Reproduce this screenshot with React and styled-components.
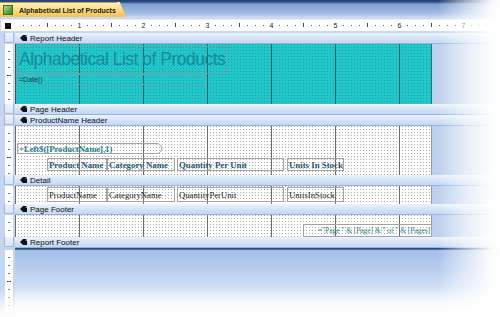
import React from 'react';
import styled, { createGlobalStyle, css } from 'styled-components';

const GlobalStyle = createGlobalStyle`
  html, body {
    margin: 0;
    padding: 0;
    background: #fff;
  }
  body {
    width: 500px;
    height: 317px;
    overflow: hidden;
    font-family: 'Liberation Sans', Arial, sans-serif;
  }
`;

const Screen = styled.div`
  position: relative;
  width: 500px;
  height: 317px;
  overflow: hidden;
  display: flex;
  flex-direction: column;
  background: #c5d6ef;
`;

const TabStrip = styled.div`
  height: 17px;
  flex: none;
  display: flex;
  align-items: flex-end;
  background: linear-gradient(to bottom, #24406c 0, #2f4f82 2px, #7e9dd0 4px, #a7bfe6 14px, #c9d9f2 17px);
`;

const DocTab = styled.div`
  height: 15px;
  width: 118px;
  margin-right: 8px;
  position: relative;
  display: flex;
  align-items: center;
  gap: 6px;
  padding-left: 3px;
  box-sizing: border-box;
  background: linear-gradient(to bottom, #fff1c4 0, #fddc85 45%, #f7c24e 100%);
  border-top: 1px solid #c89b3e;
  color: #1b1b1b;
  font-size: 7px;
  font-weight: bold;
  white-space: nowrap;

  &:after {
    content: '';
    position: absolute;
    top: -1px;
    right: -8px;
    width: 9px;
    height: 15px;
    background: linear-gradient(to bottom, #fff1c4 0, #fddc85 45%, #f7c24e 100%);
    clip-path: polygon(0 0, 30% 0, 100% 100%, 0 100%);
  }
`;

const TabIcon = styled.span`
  width: 10px;
  height: 10px;
  box-sizing: border-box;
  border: 1px solid #3d6b2f;
  background: linear-gradient(135deg, #b7e08e 0, #5fa444 60%, #3f8030 100%);
  flex: none;
`;

const RulerRow = styled.div`
  height: 15px;
  flex: none;
  box-sizing: border-box;
  padding: 2px 0 1px 1px;
  display: flex;
  background: #c9d9f1;
`;

const RulerBar = styled.div`
  flex: 1;
  display: flex;
  align-items: center;
  background:
    repeating-linear-gradient(to right, transparent 0 7px, #5a5a5a 7px 8px) 15px 5px / 100% 1px no-repeat,
    repeating-linear-gradient(to right, transparent 0 31px, #444 31px 32px) 15px 3px / 100% 4px no-repeat,
    #fff;
  border-top: 1px solid #e9eff9;
`;

const RulerCorner = styled.div`
  width: 14px;
  height: 100%;
  flex: none;
  display: flex;
  align-items: center;
  justify-content: center;
  background: #fff;

  &:before {
    content: '';
    width: 6px;
    height: 6px;
    margin-left: -1px;
    background: #111;
  }
`;

const RulerInch = styled.div`
  width: 64px;
  flex: none;
  display: flex;
  justify-content: flex-end;
`;

const RulerNum = styled.span`
  width: 7px;
  margin-right: -4px;
  text-align: center;
  background: #fff;
  font-size: 7px;
  line-height: 9px;
  color: #222;
  position: relative;
`;

const Row = styled.div`
  display: flex;
  flex: none;
  height: ${({ $h }) => $h}px;
`;

const Side = styled.div`
  width: 15px;
  flex: none;
  box-sizing: border-box;
  background: #c5d6ef;
  padding: ${({ $bar }) => ($bar ? '0 1px 1px 4px' : '0 2px 0 5px')};
  display: flex;
`;

const SideBox = styled.div`
  flex: 1;
  background: linear-gradient(to bottom, #eef3fb, #d8e4f6);
  border: 1px solid #a4badd;
  border-top: none;
`;

const VRuler = styled.div`
  flex: 1;
  background:
    repeating-linear-gradient(to bottom, transparent 0 7px, #707070 7px 8px) center 0 / 2px 100% no-repeat,
    repeating-linear-gradient(to bottom, transparent 0 31px, #333 31px 32px) center 0 / 4px 100% no-repeat,
    #fff;
`;

const SectionBar = styled.div`
  flex: 1;
  display: flex;
  align-items: center;
  gap: 3px;
  padding-left: 5px;
  box-sizing: border-box;
  background: linear-gradient(to bottom, #eef4fc 0, #d9e6f8 40%, #c4d7f2 100%);
  border-bottom: 1px solid #98b2da;
  font-size: 8px;
  color: #111;
  white-space: nowrap;
`;

const dots = (dot) => css`
  conic-gradient(from 270deg at 1px 1px, ${dot} 90deg, transparent 0) 0 0 / 3px 3px
`;

const Canvas = styled.div`
  width: 417px;
  flex: none;
  position: relative;
  box-sizing: border-box;
  border-right: 1px solid ${({ $teal }) => ($teal ? '#2f6f74' : '#9a9a9a')};
  background:
    linear-gradient(to right, ${({ $teal }) => ($teal ? '#2c5f66' : '#6c6c6c')} 1px, transparent 1px) 0 0 / 64px 100%,
    ${({ $teal }) => dots($teal ? '#15a4ac' : '#aaaaaa')},
    ${({ $teal }) => ($teal ? '#22c7ca' : '#ffffff')};
`;

const Gutter = styled.div`
  flex: 1;
  background: linear-gradient(to right, #bccfec, #d3e0f4);
`;

const EndLine = styled.div`
  height: 2px;
  flex: none;
  margin-left: 15px;
  background: linear-gradient(to bottom, #203c66, #5a7bab);
`;

const Below = styled.div`
  flex: 1;
  display: flex;
`;

const Empty = styled.div`
  flex: 1;
  background: linear-gradient(to bottom, #a4bfe8 0, #b9cef0 30%, #dfe9f8 70%, #ffffff 100%);
`;

/* design-surface controls: their place on the canvas is the content */
const Control = styled.div`
  position: absolute;
  box-sizing: border-box;
  left: ${({ $x }) => $x}px;
  top: ${({ $y }) => $y}px;
  width: ${({ $w }) => $w}px;
  height: ${({ $h }) => $h}px;
  border: 1px solid ${({ $teal }) => ($teal ? '#5eaab0' : '#a3a3a3')};
  display: flex;
  align-items: center;
  justify-content: ${({ $right }) => ($right ? 'flex-end' : 'flex-start')};
  padding: 0 1px;
  overflow: hidden;
  white-space: nowrap;
  border-radius: ${({ $round }) => ($round ? '0 5px 5px 0' : '0')};
`;

const TitleText = styled.span`
  font-family: 'Liberation Sans', Arial, sans-serif;
  font-size: 17.5px;
  letter-spacing: -0.5px;
  color: #178a99;
  line-height: 1;
`;

const SmallText = styled.span`
  font-family: 'Liberation Sans', Arial, sans-serif;
  font-size: 7px;
  color: #163f4c;
`;

const ExprText = styled.span`
  font-family: 'Liberation Serif', 'Times New Roman', serif;
  font-size: ${({ $size }) => $size || 8.8}px;
  font-weight: ${({ $bold }) => ($bold ? 'bold' : 'normal')};
  color: ${({ $color }) => $color || '#1c7e8e'};
`;

const FadeRight = styled.div`
  position: absolute;
  top: 0;
  right: 0;
  width: 62px;
  height: 100%;
  pointer-events: none;
  background: linear-gradient(to right, rgba(255, 255, 255, 0) 0, rgba(255, 255, 255, 0.55) 45%, rgba(255, 255, 255, 0.95) 85%, #fff 100%);
`;

const FadeBottom = styled.div`
  position: absolute;
  left: 0;
  bottom: 0;
  width: 100%;
  height: 30px;
  pointer-events: none;
  background: linear-gradient(to bottom, rgba(255, 255, 255, 0) 0, rgba(255, 255, 255, 0.85) 70%, #fff 100%);
`;

const BarIcon = () => (
  <svg width="7" height="6" viewBox="0 0 7 6">
    <path d="M0 3 L3 0 L7 0 L5 1.5 L7 1.5 L7 6 L3 6 Z" fill="#111" />
  </svg>
);

const Bar = ({ label }) => (
  <Row $h={11}>
    <Side $bar>
      <SideBox />
    </Side>
    <SectionBar>
      <BarIcon />
      {label}
    </SectionBar>
  </Row>
);

const Band = ({ h, teal, children }) => (
  <Row $h={h}>
    <Side>
      <VRuler />
    </Side>
    <Canvas $teal={teal}>{children}</Canvas>
    <Gutter />
  </Row>
);

const columns = [
  { x: 32, w: 60, label: 'Product Name', field: 'ProductName' },
  { x: 92, w: 68, label: 'Category Name', field: 'CategoryName' },
  { x: 162, w: 107, label: 'Quantity Per Unit', field: 'QuantityPerUnit' },
  { x: 272, w: 57, label: 'Units In Stock', field: 'UnitsInStock' },
];

const App = () => {
  const inches = [1, 2, 3, 4, 5, 6, 7];

  return (
    <>
      <GlobalStyle />
      <Screen>
        <TabStrip>
          <DocTab>
            <TabIcon />
            Alphabetical List of Products
          </DocTab>
        </TabStrip>

        <RulerRow>
          <RulerBar>
            <RulerCorner />
            {inches.map((n) => (
              <RulerInch key={n}>
                <RulerNum>{n}</RulerNum>
              </RulerInch>
            ))}
          </RulerBar>
        </RulerRow>

        <Row $h={1}>
          <Side $bar />
        </Row>

        <Bar label="Report Header" />
        <Band h={60} teal>
          <Control $teal $x={2} $y={2} $w={211} $h={28}>
            <TitleText>Alphabetical List of Products</TitleText>
          </Control>
          <Control $teal $x={2} $y={30} $w={188} $h={11}>
            <SmallText>=Date()</SmallText>
          </Control>
        </Band>

        <Bar label="Page Header" />
        <Bar label="ProductName Header" />
        <Band h={49}>
          <Control $x={2} $y={17} $w={145} $h={11} $round>
            <ExprText $bold $size={8.6}>=Left$([ProductName],1)</ExprText>
          </Control>
          {columns.map((c) => (
            <Control key={c.label} $x={c.x} $y={32} $w={c.w} $h={13}>
              <ExprText $bold $color="#1f5872">{c.label}</ExprText>
            </Control>
          ))}
        </Band>

        <Bar label="Detail" />
        <Band h={18}>
          {columns.map((c) => (
            <Control key={c.field} $x={c.x} $y={1} $w={c.w} $h={15}>
              <ExprText $size={8.7} $color="#222">{c.field}</ExprText>
            </Control>
          ))}
        </Band>

        <Bar label="Page Footer" />
        <Band h={22}>
          <Control $x={288} $y={9} $w={129} $h={13} $right>
            <ExprText $size={7.4} $color="#2a8797">="Page " &amp; [Page] &amp; " of " &amp; [Pages]</ExprText>
          </Control>
        </Band>

        <Bar label="Report Footer" />
        <EndLine />

        <Below>
          <Side>
            <VRuler />
          </Side>
          <Empty />
        </Below>

        <FadeRight />
        <FadeBottom />
      </Screen>
    </>
  );
};

export default App;
